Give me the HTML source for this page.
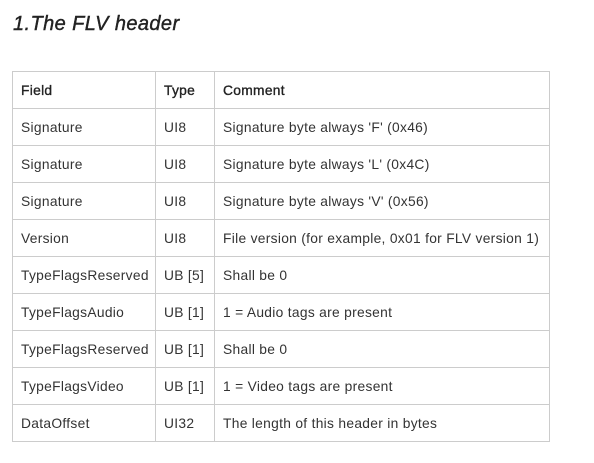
<!DOCTYPE html>
<html><head><style>
body{margin:0;background:#fff;width:594px;height:463px;overflow:hidden;font-family:"Liberation Sans",sans-serif;color:#333}
h1{position:absolute;left:13px;top:13px;margin:0;font-size:20px;font-style:italic;font-weight:normal;color:#222;-webkit-text-stroke:0.4px #222;letter-spacing:0.4px}
table{position:absolute;left:12px;top:71px;border-collapse:collapse;font-size:13.8px;letter-spacing:0.3px;table-layout:fixed;width:537px}
td{border:1px solid #ccc;height:36px;padding:0 8px;white-space:nowrap;overflow:hidden;color:#333}
tr:first-child td{font-weight:normal;color:#222;-webkit-text-stroke:0.35px #222}
</style></head><body>
<h1>1.The FLV header</h1>
<table>
<colgroup><col style="width:143px"><col style="width:59px"><col style="width:335px"></colgroup>
<tr><td>Field</td><td>Type</td><td>Comment</td></tr>
<tr><td>Signature</td><td>UI8</td><td>Signature byte always 'F' (0x46)</td></tr>
<tr><td>Signature</td><td>UI8</td><td>Signature byte always 'L' (0x4C)</td></tr>
<tr><td>Signature</td><td>UI8</td><td>Signature byte always 'V' (0x56)</td></tr>
<tr><td>Version</td><td>UI8</td><td>File version (for example, 0x01 for FLV version 1)</td></tr>
<tr><td>TypeFlagsReserved</td><td>UB [5]</td><td>Shall be 0</td></tr>
<tr><td>TypeFlagsAudio</td><td>UB [1]</td><td>1 = Audio tags are present</td></tr>
<tr><td>TypeFlagsReserved</td><td>UB [1]</td><td>Shall be 0</td></tr>
<tr><td>TypeFlagsVideo</td><td>UB [1]</td><td>1 = Video tags are present</td></tr>
<tr><td>DataOffset</td><td>UI32</td><td>The length of this header in bytes</td></tr>
</table>
</body></html>
